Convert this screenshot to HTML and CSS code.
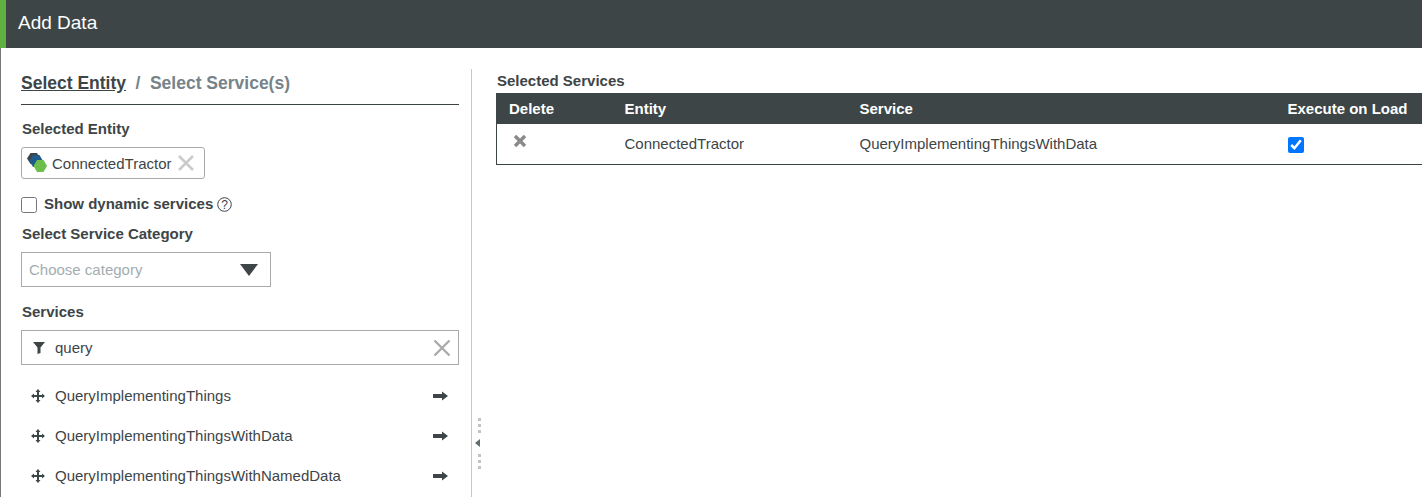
FILE: index.html
```html
<!DOCTYPE html>
<html lang="en">
<head>
<meta charset="utf-8">
<title>Add Data</title>
<link rel="stylesheet" href="styles.css">
</head>
<body>
<header class="titlebar">Add Data</header>
<main class="content">
  <section class="left">
    <nav class="steps">
      <a class="step-active">Select Entity</a>
      <span class="step-sep">/</span>
      <span class="step-next">Select Service(s)</span>
    </nav>
    <label class="label label-entity">Selected Entity</label>
    <div class="chip">
      <svg class="chip-icon" width="21" height="21" viewBox="0 0 21 21">
        <polygon points="3.5,0 10,0 13.5,5.5 10,11 3.5,11 0,5.5" fill="#3d4547"/>
        <polygon points="6,2 12.5,2 16,8 12.5,14 6,14 2.5,8" fill="#1f5c8c"/>
        <polygon points="10,7 16.5,7 20,13 16.5,19 10,19 6.5,13" fill="#6cc04a"/>
      </svg>
      <span class="chip-text">ConnectedTractor</span>
      <svg class="chip-x" width="16" height="16" viewBox="0 0 16 16"><path d="M1 1L15 15M15 1L1 15" stroke="#cbcbcb" stroke-width="2.6"/></svg>
    </div>
    <div class="dynamic">
      <input type="checkbox" class="check">
      <span class="dynamic-text">Show dynamic services</span>
      <svg class="help" width="15" height="15" viewBox="0 0 15 15"><circle cx="7.5" cy="7.5" r="6.8" fill="none" stroke="#3d4547"/><text x="7.5" y="11.5" text-anchor="middle" class="help-q">?</text></svg>
    </div>
    <label class="label label-cat">Select Service Category</label>
    <div class="select">
      <span class="placeholder">Choose category</span>
      <svg width="18" height="12" viewBox="0 0 18 12"><polygon points="0,0 18,0 9,12" fill="#3d4547"/></svg>
    </div>
    <label class="label label-services">Services</label>
    <div class="filter">
      <svg class="funnel" width="12" height="12" viewBox="0 0 12 12"><path d="M0 0H12L7.5 5.5V11L4.5 12V5.5Z" fill="#3d4547"/></svg>
      <span class="filter-text">query</span>
      <svg class="filter-x" width="18" height="18" viewBox="0 0 18 18"><path d="M1.5 1.5L16.5 16.5M16.5 1.5L1.5 16.5" stroke="#aaa" stroke-width="2.4"/></svg>
    </div>
    <ul class="services">
      <li class="service">
        <svg class="move" width="14" height="14" viewBox="0 0 14 14"><path d="M7 0L9.5 3H8V6H11V4.5L14 7L11 9.5V8H8V11H9.5L7 14L4.5 11H6V8H3V9.5L0 7L3 4.5V6H6V3H4.5Z" fill="#3d4547"/></svg>
        <span class="service-name">QueryImplementingThings</span>
        <svg class="arrow" width="15" height="10" viewBox="0 0 15 10"><path d="M0 3H9V0.5L15 5L9 9.5V7H0Z" fill="#3d4547"/></svg>
      </li>
      <li class="service">
        <svg class="move" width="14" height="14" viewBox="0 0 14 14"><path d="M7 0L9.5 3H8V6H11V4.5L14 7L11 9.5V8H8V11H9.5L7 14L4.5 11H6V8H3V9.5L0 7L3 4.5V6H6V3H4.5Z" fill="#3d4547"/></svg>
        <span class="service-name">QueryImplementingThingsWithData</span>
        <svg class="arrow" width="15" height="10" viewBox="0 0 15 10"><path d="M0 3H9V0.5L15 5L9 9.5V7H0Z" fill="#3d4547"/></svg>
      </li>
      <li class="service">
        <svg class="move" width="14" height="14" viewBox="0 0 14 14"><path d="M7 0L9.5 3H8V6H11V4.5L14 7L11 9.5V8H8V11H9.5L7 14L4.5 11H6V8H3V9.5L0 7L3 4.5V6H6V3H4.5Z" fill="#3d4547"/></svg>
        <span class="service-name">QueryImplementingThingsWithNamedData</span>
        <svg class="arrow" width="15" height="10" viewBox="0 0 15 10"><path d="M0 3H9V0.5L15 5L9 9.5V7H0Z" fill="#3d4547"/></svg>
      </li>
    </ul>
  </section>
  <div class="splitter">
    <span class="dots"></span>
    <svg class="collapse" width="5" height="8" viewBox="0 0 5 8"><polygon points="5,0 5,8 0,4" fill="#5f6b6d"/></svg>
    <span class="dots"></span>
  </div>
  <section class="right">
    <h2 class="right-title">Selected Services</h2>
    <table class="grid">
      <thead>
        <tr><th class="c-del">Delete</th><th class="c-ent">Entity</th><th class="c-svc">Service</th><th>Execute on Load</th></tr>
      </thead>
      <tbody>
        <tr>
          <td class="del-cell"><svg width="14" height="14" viewBox="0 0 14 14"><path d="M2 2L12 12M12 2L2 12" stroke="#8a8a8a" stroke-width="3.4"/></svg></td>
          <td>ConnectedTractor</td>
          <td>QueryImplementingThingsWithData</td>
          <td class="exec-cell"><input type="checkbox" class="check" checked></td>
        </tr>
      </tbody>
    </table>
  </section>
</main>
</body>
</html>
```
FILE: styles.css
```css
* { box-sizing: border-box; }
html, body { height: 100%; }
body {
  margin: 0;
  overflow: hidden;
  background: #fff;
  color: #3d4547;
  font-family: "Liberation Sans", Arial, sans-serif;
  font-size: 15px;
  display: flex;
  flex-direction: column;
}
.titlebar {
  flex: none;
  height: 48px;
  background: #3d4547;
  border-left: 6px solid #5fb040;
  color: #fff;
  font-size: 19px;
  line-height: 45px;
  padding-left: 12px;
}
.content {
  flex: 1;
  min-height: 0;
  display: flex;
  border-left: 1px solid #777;
  padding-top: 21px;
}
.left {
  flex: none;
  width: 471px;
  padding: 0 12px 0 20px;
  border-right: 1px solid #c8c8c8;
  overflow: hidden;
}
.steps {
  height: 36px;
  border-bottom: 1px solid #3d4547;
  font-size: 17.5px;
  font-weight: 700;
  line-height: 28px;
  display: flex;
  gap: 9.5px;
}
.step-active { text-decoration: underline; }
.step-sep, .step-next { color: #76848a; }
.label { display: block; font-weight: 700; font-size: 15px; line-height: 16px; padding-left: 1px; }
.label-entity { margin-top: 16px; }
.chip {
  margin-top: 10px;
  width: 184px;
  height: 32px;
  border: 1px solid #aaa;
  border-radius: 3px;
  display: flex;
  align-items: center;
  padding-left: 5px;
}
.chip-icon { flex: none; }
.chip-text { margin-left: 4px; }
.chip-x { margin-left: 6px; }
.dynamic { margin-top: 17px; display: flex; align-items: center; height: 18px; }
.check { margin: 0; width: 16px; height: 16px; flex: none; }
.dynamic-text { font-weight: 700; margin-left: 7px; line-height: 16px; margin-bottom: 2px; }
.help { margin-left: 4px; margin-bottom: 2px; }
.help-q { font-size: 12px; fill: #3d4547; }
.label-cat { margin-top: 12px; }
.select {
  margin-top: 10px;
  width: 250px;
  height: 35px;
  border: 1px solid #aaa;
  display: flex;
  align-items: center;
  justify-content: space-between;
  padding: 0 12px 0 7px;
}
.placeholder { color: #a3adb0; }
.label-services { margin-top: 17px; }
.filter {
  margin-top: 10px;
  height: 35px;
  border: 1px solid #aaa;
  display: flex;
  align-items: center;
  padding: 0 7px 0 11px;
}
.filter-text { margin-left: 10px; flex: 1; }
.services { list-style: none; margin: 11px 0 0; padding: 0; }
.service {
  height: 40px;
  display: flex;
  align-items: center;
  padding: 0 11px 0 10px;
}
.service-name { margin-left: 10px; flex: 1; margin-bottom: 2px; }
.splitter {
  flex: none;
  width: 15px;
  display: flex;
  flex-direction: column;
  align-items: center;
  justify-content: flex-end;
  padding-bottom: 28px;
  gap: 6px;
}
.dots { width: 3px; height: 15px; background: repeating-linear-gradient(#c0c4c6 0 3px, #fff 3px 6px); }
.collapse { margin-left: -5px; margin-bottom: 1px; }
.right { flex: 1; min-width: 0; padding: 0 0 0 10px; margin-left: -1px; }
.right-title { margin: 0; font-size: 15px; line-height: 24px; height: 24px; font-weight: 700; padding-left: 1px; }
.grid { width: 100%; border-collapse: collapse; table-layout: fixed; border-left: 1px solid #3d4547; border-bottom: 1px solid #3d4547; }
.grid th { background: #3d4547; color: #fff; height: 31px; text-align: left; font-size: 15px; padding: 0 0 0 12px; }
.grid td { height: 40px; padding: 0 0 0 12px; }
.c-del { width: 116px; }
.c-ent { width: 235px; }
.c-svc { width: 428px; }
.del-cell svg { display: block; margin: -6px 0 0 4px; }
.exec-cell .check { display: block; margin-top: 3px; }
```
